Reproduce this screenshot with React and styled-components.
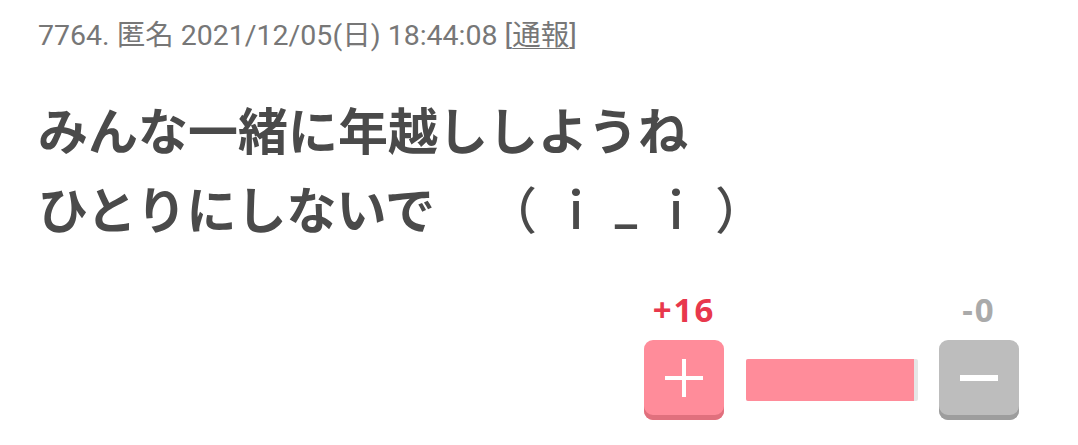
import React from "react";
import styled, { createGlobalStyle } from "styled-components";

const Global = createGlobalStyle`
  html, body { margin: 0; padding: 0; background: #fff; }
  body { font-family: Roboto, "Noto Sans CJK JP", sans-serif; }
`;

const Page = styled.div`
  width: 1078px;
  height: 445px;
  box-sizing: border-box;
  padding: 18px 59px 0 38px;
  display: flex;
  flex-direction: column;
`;

const Meta = styled.div`
  font-family: Roboto, "Noto Sans CJK JP", sans-serif;
  font-size: 28.5px;
  color: #777;
  line-height: 36px;
  white-space: nowrap;
`;

const Report = styled.span`
  text-decoration: underline;
  text-decoration-thickness: 1px;
  text-underline-offset: 3px;
`;

const Body = styled.div`
  margin-top: 35px;
  font-family: "Noto Sans CJK JP", sans-serif;
  font-weight: 700;
  font-size: 50px;
  line-height: 79px;
  color: #4a4a4a;
  white-space: pre;
  text-spacing-trim: space-all;
`;

const Line = styled.div`
  display: flex;
  align-items: center;
  height: 79px;
`;

const Kaomoji = styled.span`
  display: inline-flex;
  margin-left: 52px;
  font-weight: 500;
`;

const Cell = styled.span`
  display: inline-flex;
  justify-content: ${(p) => p.$align || "center"};
  width: 50px;
  margin-left: ${(p) => p.$gap || 0}px;
  font-family: ${(p) => (p.$latin ? "Roboto, sans-serif" : '"Noto Sans CJK JP", sans-serif')};
`;

const Votes = styled.div`
  margin-top: 45px;
  align-self: flex-end;
  display: flex;
  align-items: flex-end;
  gap: 21px;
`;

const Col = styled.div`
  display: flex;
  flex-direction: column;
  align-items: center;
  gap: 12px;
`;

const Count = styled.div`
  font-family: "Noto Sans", sans-serif;
  font-weight: 700;
  font-size: 33px;
  letter-spacing: 2px;
  line-height: 36px;
  color: ${(p) => p.$color};
`;

const Btn = styled.button`
  width: 80px;
  height: 80px;
  border: none;
  padding: 0 0 4px;
  border-radius: 9px;
  background: ${(p) => p.$bg};
  box-shadow: inset 0 -5px 0 ${(p) => p.$shadow};
  display: flex;
  align-items: center;
  justify-content: center;
  box-sizing: border-box;
`;

const Bar = styled.div`
  width: 172px;
  height: 42px;
  margin-bottom: 19px;
  margin-left: 1px;
  background: #e6e6e6;
  border-radius: 2px;
  overflow: hidden;
  display: flex;
`;

const Fill = styled.div`
  height: 100%;
  background: #ff8c9a;
`;

export default function App() {
  const plus = 16;
  const minus = 0;
  return (
    <>
      <Global />
      <Page>
        <Meta>
          7764. 匿名 2021/12/05(日) 18:44:08 [<Report>通報</Report>]
        </Meta>
        <Body>
          <Line>みんな一緒に年越ししようね</Line>
          <Line>
            ひとりにしないで
            <Kaomoji>
              <Cell $align="flex-end">（</Cell>
              <Cell $gap={14}>ｉ</Cell>
              <Cell $latin>_</Cell>
              <Cell>ｉ</Cell>
              <Cell $gap={14} $align="flex-start">）</Cell>
            </Kaomoji>
          </Line>
        </Body>
        <Votes>
          <Col>
            <Count $color="#e8384c">+{plus}</Count>
            <Btn $bg="#ff8c9a" $shadow="#e0707d" aria-label="plus">
              <svg width="38" height="38" viewBox="0 0 38 38">
                <rect x="17" y="0" width="4" height="38" fill="#fff" />
                <rect x="0" y="17" width="38" height="4" fill="#fff" />
              </svg>
            </Btn>
          </Col>
          <Bar>
            <Fill style={{ width: `calc(${(plus / Math.max(plus + minus, 1)) * 100}% - 4px)` }} />
          </Bar>
          <Col>
            <Count $color="#aaaaaa">-{minus}</Count>
            <Btn $bg="#bdbdbd" $shadow="#9d9d9d" aria-label="minus">
              <svg width="38" height="6" viewBox="0 0 38 6">
                <rect x="0" y="0" width="38" height="6" fill="#fff" />
              </svg>
            </Btn>
          </Col>
        </Votes>
      </Page>
    </>
  );
}
